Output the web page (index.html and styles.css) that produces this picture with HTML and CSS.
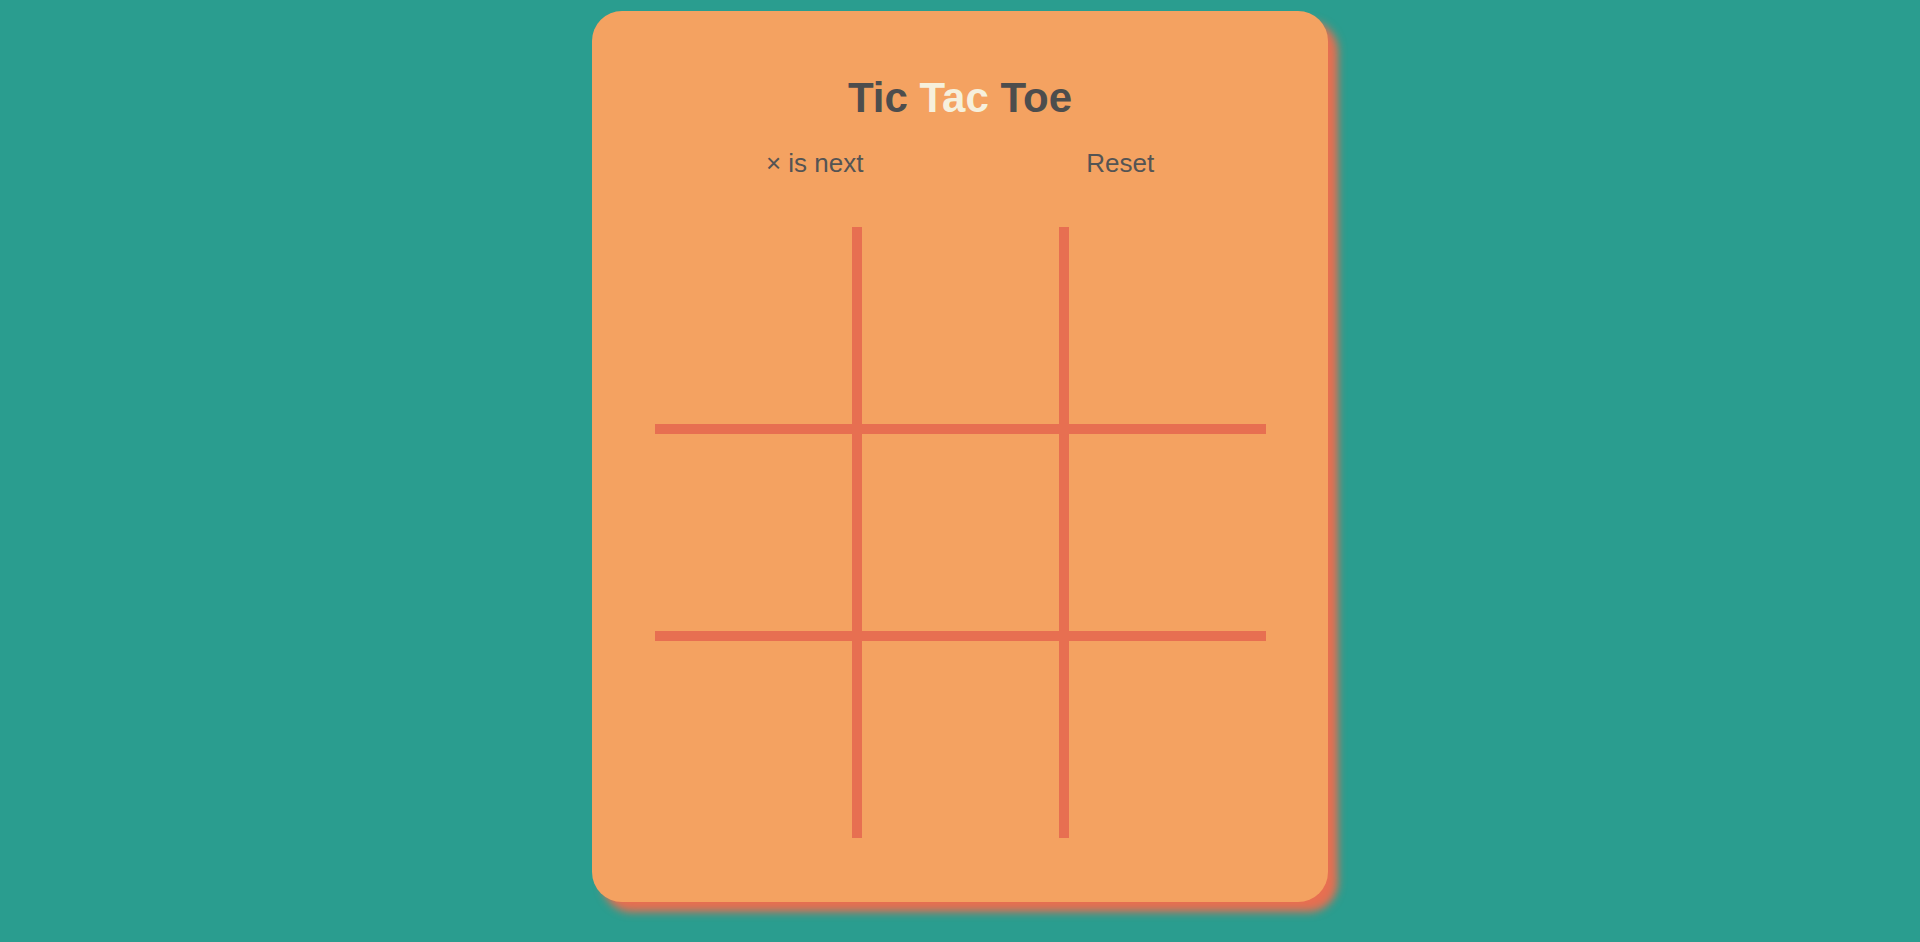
FILE: index.html
```html
<!DOCTYPE html>
<html lang="en">
<head>
<meta charset="utf-8">
<title>Tic Tac Toe</title>
<link rel="stylesheet" href="styles.css">
</head>
<body>
<main class="card">
  <h1 class="title">Tic <span class="accent">Tac</span> Toe</h1>
  <div class="status">
    <span class="next">× is next</span>
    <span class="reset">Reset</span>
  </div>
  <div class="board">
    <div class="cell"></div><div class="cell"></div><div class="cell"></div>
    <div class="cell"></div><div class="cell"></div><div class="cell"></div>
    <div class="cell"></div><div class="cell"></div><div class="cell"></div>
  </div>
</main>
</body>
</html>
```
FILE: styles.css
```css
html, body {
  margin: 0;
  padding: 0;
}
body {
  background: #2a9d8f;
  font-family: "Liberation Sans", Arial, sans-serif;
  display: flex;
  justify-content: center;
  padding-top: 11px;
  min-height: 931px;
}
.card {
  width: 736px;
  height: 891px;
  box-sizing: border-box;
  background: #f4a261;
  border-radius: 30px;
  box-shadow: 10px 10px 8px #e76f51;
  padding-top: 62px;
  display: flex;
  flex-direction: column;
  align-items: center;
}
.title {
  margin: 0;
  font-size: 42px;
  line-height: 49px;
  font-weight: bold;
  color: #4d4d4d;
}
.accent {
  color: #f6f0dc;
}
.status {
  margin-top: 26px;
  width: 611px;
  display: flex;
  justify-content: space-around;
  font-size: 26px;
  line-height: 30px;
  color: #545454;
}
.board {
  margin-top: 49px;
  width: 611px;
  height: 611px;
  display: grid;
  grid-template-columns: repeat(3, 197px);
  grid-template-rows: repeat(3, 197px);
  gap: 10px;
  background: #e76f51;
}
.cell {
  background: #f4a261;
}
```
